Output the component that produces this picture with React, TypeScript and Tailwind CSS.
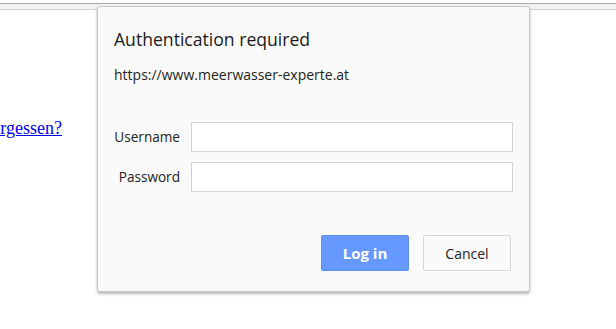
export default function App() {
  return (
    <div className="relative w-[616px] h-[329px] bg-white overflow-hidden">
      {/* browser chrome edge */}
      <div className="h-[3px] bg-white" />
      <div className="h-px bg-[#a9a9a9]" />
      <div className="h-[5px] bg-[#f1f1f1]" />
      <div className="h-px bg-[#d2d2d2]" />

      {/* page content behind the dialog */}
      <div className="mt-[106px] w-[62px] overflow-hidden flex justify-end whitespace-nowrap">
        <a href="#" className="text-[18px] leading-[24px] text-[#0000ee] underline" style={{ fontFamily: '"Liberation Serif", serif' }}>
          Passwort vergessen?
        </a>
      </div>

      {/* auth dialog */}
      <div
        className="absolute left-[97px] top-[6px] w-[433px] h-[286px] bg-[#fafafa] border border-[#c6c6c6] rounded-[3px] shadow-[0_2px_3px_rgba(0,0,0,0.28)] text-[#222]"
        style={{ fontFamily: '"Open Sans", "Noto Sans", sans-serif' }}
      >
        <div className="pl-[16px] pt-[20px]">
          <h1 className="text-[17.6px] leading-[24px] text-[#1a1a1a]">Authentication required</h1>
          <p className="mt-[15px] text-[14px] leading-[18px]">https://www.meerwasser-experte.at</p>
        </div>

        <div className="mt-[38px] flex flex-col gap-[10px]">
          <div className="flex items-center">
            <label className="w-[82px] text-right text-[13.6px]">Username</label>
            <input className="ml-[11px] w-[322px] h-[30px] bg-white border border-[#d3d3d3] outline-none" />
          </div>
          <div className="flex items-center">
            <label className="w-[82px] text-right text-[13.6px]">Password</label>
            <input type="password" className="ml-[11px] w-[322px] h-[30px] bg-white border border-[#d3d3d3] outline-none" />
          </div>
        </div>

        <div className="mt-[43px] pr-[18px] flex justify-end gap-[14px]">
          <button className="w-[88px] h-[36px] rounded-[2px] bg-[#6699ff] border border-[#5c8ef0] text-white text-[15px] font-bold">
            Log in
          </button>
          <button className="w-[88px] h-[36px] rounded-[2px] bg-[#fafafa] border border-[#d6d6d6] text-[#222] text-[14px]">
            Cancel
          </button>
        </div>
      </div>
    </div>
  );
}
